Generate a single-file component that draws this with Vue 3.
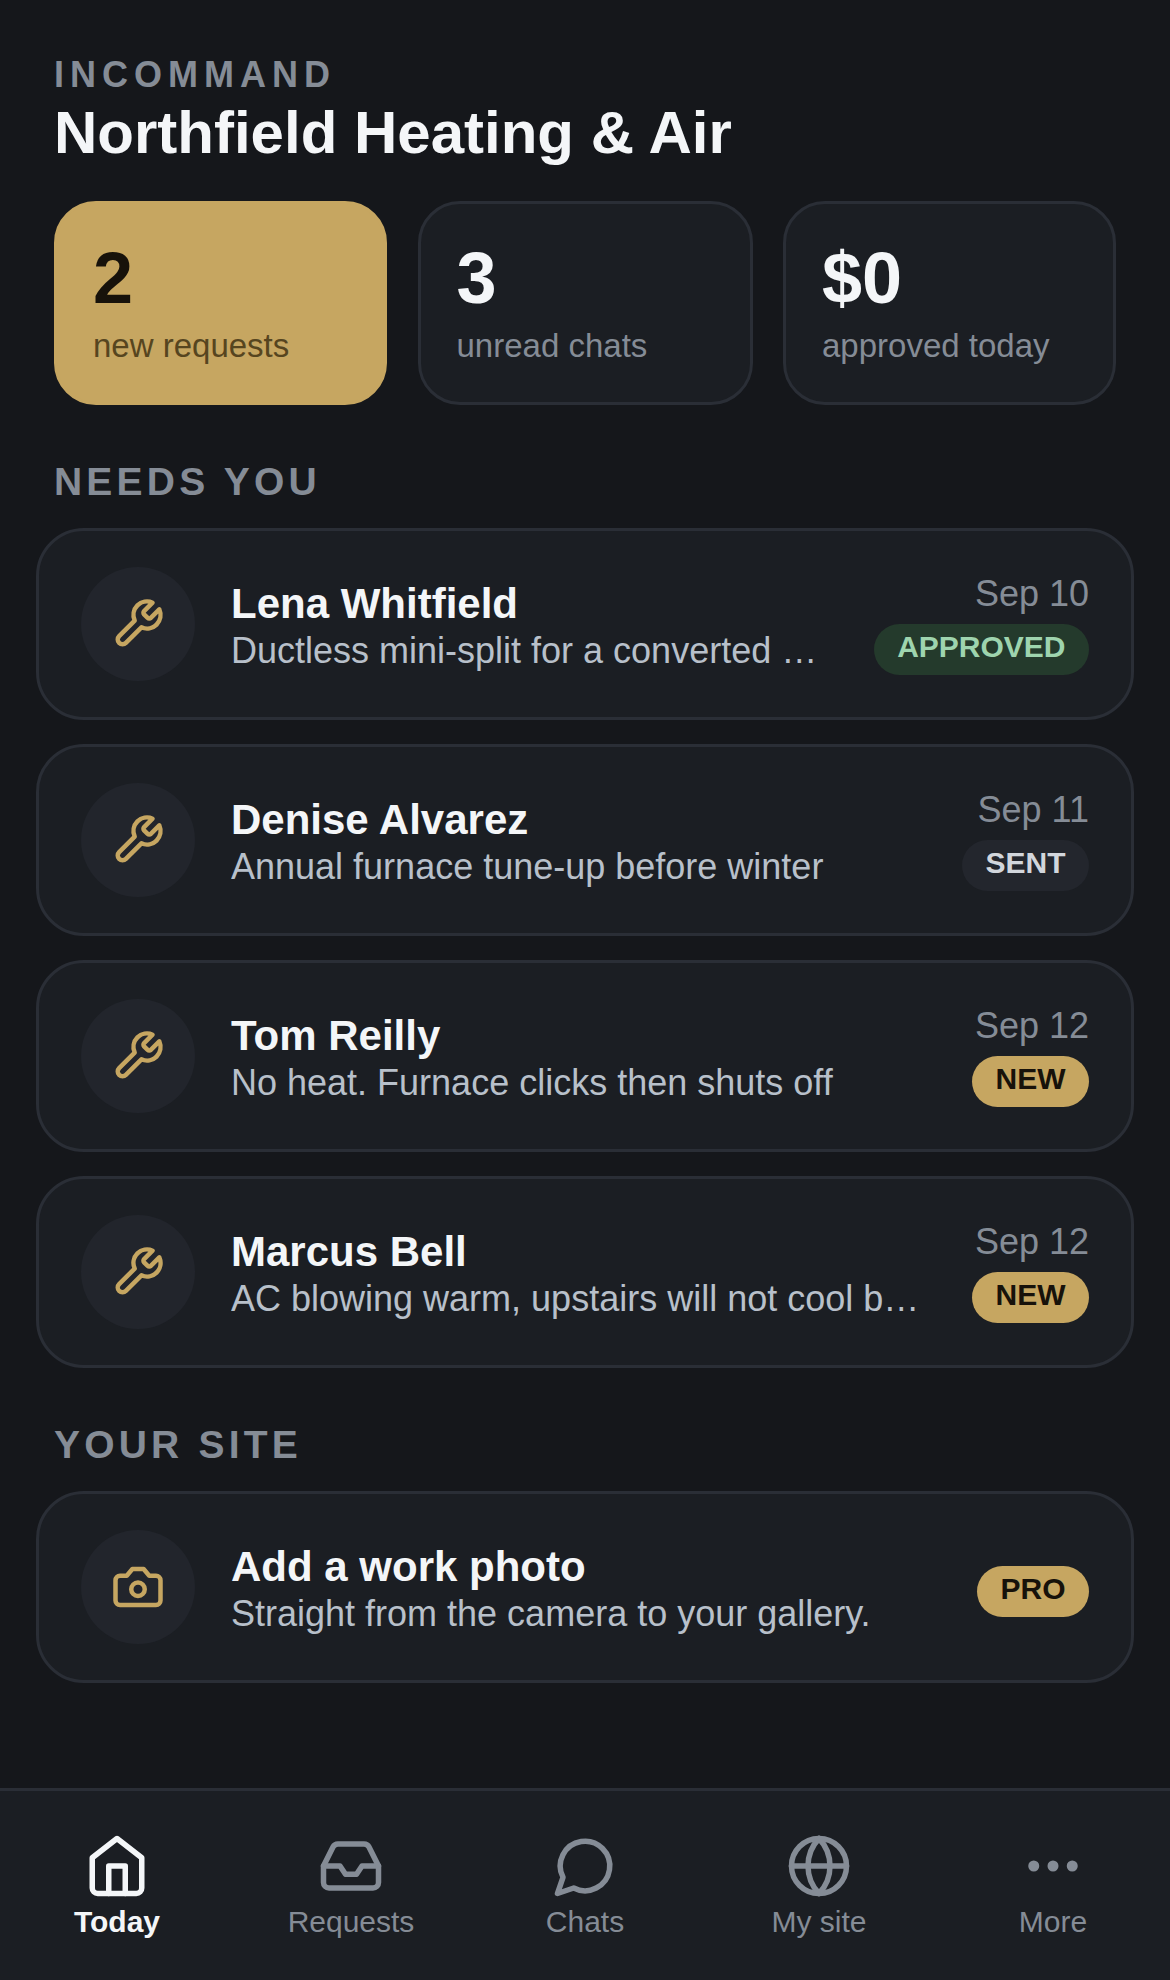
<script setup>
const stats = [
  { value: '2', label: 'new requests', gold: true },
  { value: '3', label: 'unread chats' },
  { value: '$0', label: 'approved today' },
]
const requests = [
  { name: 'Lena Whitfield', desc: 'Ductless mini-split for a converted workshop', date: 'Sep 10', status: 'APPROVED', kind: 'approved' },
  { name: 'Denise Alvarez', desc: 'Annual furnace tune-up before winter', date: 'Sep 11', status: 'SENT', kind: 'sent' },
  { name: 'Tom Reilly', desc: 'No heat. Furnace clicks then shuts off', date: 'Sep 12', status: 'NEW', kind: 'new' },
  { name: 'Marcus Bell', desc: 'AC blowing warm, upstairs will not cool below 80', date: 'Sep 12', status: 'NEW', kind: 'new' },
]
const navItems = ['Today', 'Requests', 'Chats', 'My site', 'More']
</script>

<template>
  <div class="page">
    <header class="head">
      <div class="brand">INCOMMAND</div>
      <h1 class="title">Northfield Heating &amp; Air</h1>
    </header>

    <section class="stats">
      <div v-for="s in stats" :key="s.label" class="stat" :class="{ gold: s.gold }">
        <div class="stat-value">{{ s.value }}</div>
        <div class="stat-label">{{ s.label }}</div>
      </div>
    </section>

    <h2 class="section-title">NEEDS YOU</h2>
    <section class="list">
      <article v-for="r in requests" :key="r.name" class="row">
        <div class="avatar">
          <svg class="row-icon" viewBox="0 0 24 24">
            <path d="M14.7 6.3a1 1 0 0 0 0 1.4l1.6 1.6a1 1 0 0 0 1.4 0l3.77-3.77a6 6 0 0 1-7.94 7.94l-6.91 6.91a2.12 2.12 0 0 1-3-3l6.91-6.91a6 6 0 0 1 7.94-7.94l-3.76 3.76z" />
          </svg>
        </div>
        <div class="body">
          <div class="name">{{ r.name }}</div>
          <div class="desc">{{ r.desc }}</div>
        </div>
        <div class="meta">
          <div class="date">{{ r.date }}</div>
          <span class="pill" :class="r.kind">{{ r.status }}</span>
        </div>
      </article>
    </section>

    <h2 class="section-title">YOUR SITE</h2>
    <section class="list">
      <article class="row">
        <div class="avatar">
          <svg class="row-icon" viewBox="0 0 24 24">
            <path d="M14.5 4h-5L7 7H4a2 2 0 0 0-2 2v9a2 2 0 0 0 2 2h16a2 2 0 0 0 2-2V9a2 2 0 0 0-2-2h-3l-2.5-3z" />
            <circle cx="12" cy="13" r="3" />
          </svg>
        </div>
        <div class="body">
          <div class="name">Add a work photo</div>
          <div class="desc">Straight from the camera to your gallery.</div>
        </div>
        <div class="meta solo">
          <span class="pill new">PRO</span>
        </div>
      </article>
    </section>

    <nav class="nav">
      <div v-for="(item, i) in navItems" :key="item" class="nav-item" :class="{ active: i === 0 }">
        <svg class="nav-icon" viewBox="0 0 24 24">
          <template v-if="i === 0">
            <path d="m3 9 9-7 9 7v11a2 2 0 0 1-2 2H5a2 2 0 0 1-2-2z" />
            <polyline points="9 22 9 12 15 12 15 22" />
          </template>
          <template v-else-if="i === 1">
            <polyline points="22 12 16 12 14 15 10 15 8 12 2 12" />
            <path d="M5.45 5.11 2 12v6a2 2 0 0 0 2 2h16a2 2 0 0 0 2-2v-6l-3.45-6.89A2 2 0 0 0 16.76 4H7.24a2 2 0 0 0-1.79 1.11z" />
          </template>
          <template v-else-if="i === 2">
            <path d="M7.9 20A9 9 0 1 0 4 16.1L2 22Z" />
          </template>
          <template v-else-if="i === 3">
            <circle cx="12" cy="12" r="10" />
            <path d="M12 2a14.5 14.5 0 0 0 0 20 14.5 14.5 0 0 0 0-20" />
            <path d="M2 12h20" />
          </template>
          <template v-else>
            <circle cx="12" cy="12" r="1" />
            <circle cx="19" cy="12" r="1" />
            <circle cx="5" cy="12" r="1" />
          </template>
        </svg>
        <span class="nav-label">{{ item }}</span>
      </div>
    </nav>
  </div>
</template>

<style>
html, body { margin: 0; background: #15171b; }
</style>

<style scoped>
* { box-sizing: border-box; }
.page {
  width: 1170px;
  min-height: 1980px;
  display: flex;
  flex-direction: column;
  background: #15171b;
  font-family: "Liberation Sans", Arial, sans-serif;
}
.head { padding: 54px 54px 0; }
.brand {
  font-size: 36px;
  line-height: 42px;
  font-weight: 700;
  letter-spacing: 6px;
  color: #858c96;
}
.title {
  margin: 1px 0 0;
  font-size: 60px;
  line-height: 72px;
  font-weight: 700;
  color: #f4f6f8;
}
.stats {
  display: grid;
  grid-template-columns: 333fr 335fr 333fr;
  gap: 30.5px;
  padding: 0 54px;
  margin-top: 32px;
}
.stat {
  height: 204px;
  padding: 38px 36px 0;
  border: 3px solid #2a2e36;
  border-radius: 42px;
  background: #1b1e23;
}
.stat.gold { background: #c6a661; border-color: #c6a661; }
.stat-value {
  font-size: 72px;
  line-height: 72px;
  font-weight: 700;
  color: #f4f6f8;
}
.stat.gold .stat-value { color: #17120a; }
.stat-label {
  margin-top: 11px;
  font-size: 33px;
  line-height: 42px;
  color: #858c96;
}
.stat.gold .stat-label { color: #56451f; }
.section-title {
  margin: 54px 0 23px;
  padding: 0 54px;
  font-size: 39px;
  line-height: 46px;
  font-weight: 700;
  letter-spacing: 4.2px;
  color: #858c96;
}
.list {
  display: flex;
  flex-direction: column;
  gap: 24px;
  padding: 0 36px;
}
.row {
  height: 192px;
  display: flex;
  align-items: center;
  gap: 36px;
  padding: 0 42px;
  border: 3px solid #2a2e36;
  border-radius: 48px;
  background: #1b1e23;
}
.avatar {
  flex: none;
  width: 114px;
  height: 114px;
  border-radius: 50%;
  background: #22252c;
  display: flex;
  align-items: center;
  justify-content: center;
}
.row-icon {
  width: 54px;
  height: 54px;
  fill: none;
  stroke: #c6a661;
  stroke-width: 2;
  stroke-linecap: round;
  stroke-linejoin: round;
}
.body { flex: 1; min-width: 0; padding-top: 6px; }
.name {
  font-size: 42px;
  line-height: 48px;
  font-weight: 700;
  color: #f4f6f8;
}
.desc {
  font-size: 36px;
  line-height: 46px;
  color: #b8c0ca;
  white-space: nowrap;
  overflow: hidden;
  text-overflow: ellipsis;
}
.meta {
  flex: none;
  display: flex;
  flex-direction: column;
  align-items: flex-end;
  gap: 9px;
}
.meta.solo { margin-top: 8px; }
.date {
  font-size: 36px;
  line-height: 42px;
  color: #858c96;
}
.pill {
  height: 51px;
  padding: 0 23.5px;
  border-radius: 26px;
  font-size: 30px;
  line-height: 45px;
  font-weight: 700;
}
.pill.approved { background: #243a2c; color: #9ed4ae; }
.pill.sent { background: #23262d; color: #d2d6dc; }
.pill.new { background: #c6a661; color: #17120a; }
.nav {
  margin-top: auto;
  height: 192px;
  display: grid;
  grid-template-columns: repeat(5, 1fr);
  padding-top: 42px;
  border-top: 3px solid #2a2e36;
  background: #1b1e23;
}
.nav-item {
  display: flex;
  flex-direction: column;
  align-items: center;
  gap: 5px;
  color: #858c96;
}
.nav-item.active { color: #f4f6f8; }
.nav-icon {
  width: 66px;
  height: 66px;
  fill: none;
  stroke: currentColor;
  stroke-width: 2;
  stroke-linecap: round;
  stroke-linejoin: round;
}
.nav-label { font-size: 30px; line-height: 36px; }
.nav-item.active .nav-label { font-weight: 700; }
</style>
